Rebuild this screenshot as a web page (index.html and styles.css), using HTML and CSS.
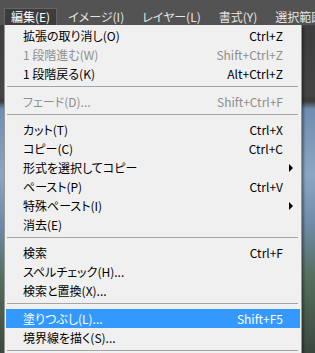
FILE: index.html
```html
<!DOCTYPE html>
<html lang="ja">
<head>
    <meta charset="UTF-8">
    <title>編集メニュー</title>
    <link rel="stylesheet" href="styles.css">
</head>
<body>
<div class="menubar">
    <span class="menu-title active">編集(E)</span>
    <span class="menu-title">イメージ(I)</span>
    <span class="menu-title">レイヤー(L)</span>
    <span class="menu-title">書式(Y)</span>
    <span class="menu-title">選択範囲(S)</span>
</div>

<div class="workspace">
    <ul class="dropdown">
        <li class="item"><span class="label">拡張の取り消し(O)</span><span class="key">Ctrl+Z</span><span></span></li>
        <li class="item disabled"><span class="label">1 段階進む(W)</span><span class="key">Shift+Ctrl+Z</span><span></span></li>
        <li class="item"><span class="label">1 段階戻る(K)</span><span class="key">Alt+Ctrl+Z</span><span></span></li>
        <li class="sep"></li>
        <li class="item disabled"><span class="label">フェード(D)...</span><span class="key">Shift+Ctrl+F</span><span></span></li>
        <li class="sep"></li>
        <li class="item"><span class="label">カット(T)</span><span class="key">Ctrl+X</span><span></span></li>
        <li class="item"><span class="label">コピー(C)</span><span class="key">Ctrl+C</span><span></span></li>
        <li class="item"><span class="label">形式を選択してコピー</span><span class="key"></span><span class="arrow"></span></li>
        <li class="item"><span class="label">ペースト(P)</span><span class="key">Ctrl+V</span><span></span></li>
        <li class="item"><span class="label">特殊ペースト(I)</span><span class="key"></span><span class="arrow"></span></li>
        <li class="item"><span class="label">消去(E)</span><span class="key"></span><span></span></li>
        <li class="sep"></li>
        <li class="item"><span class="label">検索</span><span class="key">Ctrl+F</span><span></span></li>
        <li class="item"><span class="label">スペルチェック(H)...</span><span class="key"></span><span></span></li>
        <li class="item"><span class="label">検索と置換(X)...</span><span class="key"></span><span></span></li>
        <li class="sep"></li>
        <li class="item selected"><span class="label">塗りつぶし(L)...</span><span class="key">Shift+F5</span><span></span></li>
        <li class="item"><span class="label">境界線を描く(S)...</span><span class="key"></span><span></span></li>
        <li class="sep"></li>
    </ul>
</div>
</body>
</html>
```

FILE: styles.css
```css
body {
    margin: 0;
    padding: 0;
    font-family: "Noto Sans CJK JP", sans-serif;
    font-size: 12px;
    font-feature-settings: "palt";
    background: #3a3a3a;
    overflow: hidden;
}
.menubar {
    height: 25px;
    background: #535353;
    display: flex;
    align-items: flex-end;
    gap: 4px;
    padding-left: 4px;
    white-space: nowrap;
    overflow: hidden;
}
.menu-title {
    height: 17px;
    line-height: 15px;
    padding: 0 6px;
    color: #e6e6e6;
    box-sizing: border-box;
    border: 1px solid transparent;
    border-bottom: none;
}
.menu-title.active {
    background: #3c3c3c;
    border-color: #666;
    color: #fff;
}
.workspace {
    position: relative;
    height: 328px;
    background: linear-gradient(to bottom, #3d3d3d 0, #444 70px, #3a3a3a 76px, #6f8db0 84px, #8aa6c4 150px, #6f8aa8 200px, #55705f 250px, #46564a 300px, #3c463e 100%);
}
.dropdown {
    position: absolute;
    left: 4px;
    top: 0;
    width: 298px;
    box-sizing: border-box;
    margin: 0;
    padding: 1px;
    list-style: none;
    background: #f0f0f0;
    border: 1px solid #979797;
    border-top: none;
    box-shadow: 2px 2px 2px rgba(0,0,0,0.35);
}
.item {
    display: grid;
    grid-template-columns: 1fr auto 17px;
    align-items: center;
    height: 19px;
    line-height: 19px;
    padding-left: 17px;
    color: #000;
    white-space: nowrap;
}
.item.disabled {
    color: #8e8e8e;
}
.item.selected {
    background: #3399ff;
    color: #fff;
}
.arrow {
    width: 0;
    height: 0;
    margin-left: 6px;
    border-left: 4px solid #000;
    border-top: 4px solid transparent;
    border-bottom: 4px solid transparent;
}
.sep {
    height: 1px;
    margin: 3px 2px 5px 1px;
    background: #a5a5a5;
}
```
